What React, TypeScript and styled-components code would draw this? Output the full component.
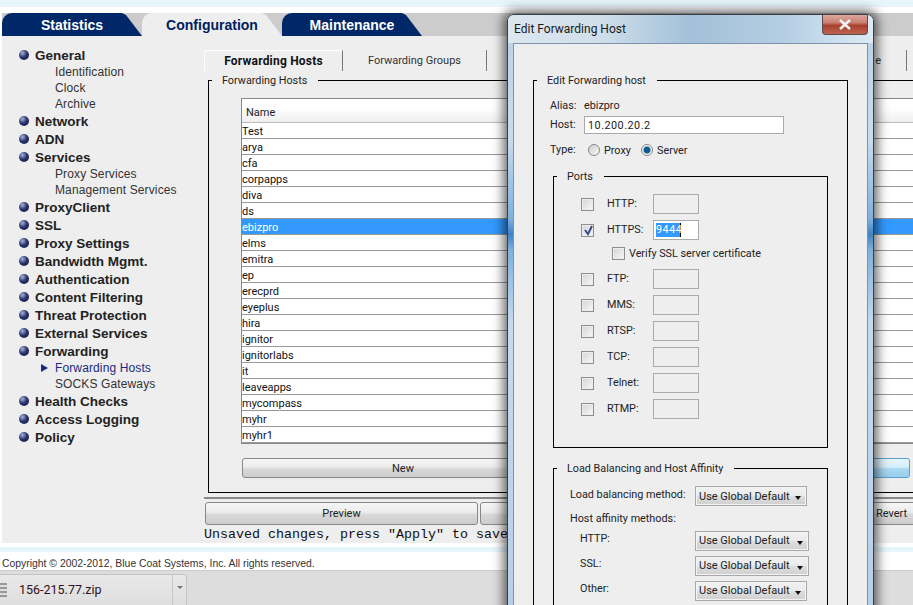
import React from "react";
import styled, { createGlobalStyle } from "styled-components";

const GlobalStyle = createGlobalStyle`
  html, body {
    margin: 0;
    padding: 0;
    background: #fff;
    overflow: hidden;
  }
  * { box-sizing: border-box; }
`;

const uiFont = `Roboto, "Noto Sans", sans-serif`;
const arial = `"Liberation Sans", Arial, sans-serif`;

const Page = styled.div`
  position: relative;
  width: 913px;
  height: 605px;
  overflow: hidden;
  background: #fff;
  font-family: ${arial};
`;

const TopStrip = styled.div`
  height: 7px;
  background: #e8f6fc;
  margin-bottom: 6px;
`;

const TabBar = styled.nav`
  display: flex;
  height: 23px;
  margin-left: 2px;
  background: #cccccc;
`;

const NavTab = styled.div<{ $active?: boolean }>`
  width: 140px;
  height: 23px;
  display: flex;
  align-items: center;
  justify-content: center;
  font-size: 14px;
  font-weight: bold;
  color: ${(p) => (p.$active ? "#002060" : "#fff")};
  background: ${(p) => (p.$active ? "#eeeeee" : "#002868")};
  border-top-left-radius: 10px;
  clip-path: polygon(0 0, 120px 0, 124px 2px, 140px 23px, 0 23px);
`;

const Body = styled.div`
  display: flex;
  height: 507px;
  margin-left: 2px;
  background: #eeeeee;
`;

const Sidebar = styled.ul`
  width: 202px;
  flex: none;
  list-style: none;
  margin: 0;
  padding: 10px 0 0 17px;
`;

const GroupRow = styled.li`
  display: flex;
  align-items: center;
  gap: 6px;
  height: 18px;
  line-height: 17px;
  font-size: 13.5px;
  font-weight: bold;
  color: #222;
`;

const Ball = styled.span`
  width: 10px;
  height: 10px;
  border-radius: 50%;
  background: radial-gradient(circle at 35% 30%, #aab4d8 0, #2a3570 45%, #0a1030 100%);
`;

const SubRow = styled.li<{ $current?: boolean }>`
  position: relative;
  height: 16px;
  line-height: 17px;
  padding-left: 36px;
  font-size: 12px;
  letter-spacing: 0.12px;
  color: ${(p) => (p.$current ? "#1a2a80" : "#333")};
`;

const CurrentArrow = styled.span`
  position: absolute;
  left: 22px;
  top: 4px;
  width: 0;
  height: 0;
  border-left: 7px solid #1a2a80;
  border-top: 4px solid transparent;
  border-bottom: 4px solid transparent;
`;

const Main = styled.div`
  width: 824px;
  flex: none;
  padding-top: 14px;
  margin-right: -200px;
`;

const SubTabs = styled.div`
  display: flex;
  height: 23px;
`;

const SubTab = styled.div<{ $active?: boolean; $w: number; $end?: boolean }>`
  width: ${(p) => p.$w}px;
  height: 21px;
  flex: none;
  display: flex;
  align-items: center;
  justify-content: ${(p) => (p.$end ? "flex-end" : "center")};
  padding-right: ${(p) => (p.$end ? 25 : 0)}px;
  font-family: ${uiFont};
  font-size: ${(p) => (p.$active ? 12 : 11)}px;
  letter-spacing: ${(p) => (p.$active ? 0.2 : 0)}px;
  font-weight: ${(p) => (p.$active ? "bold" : "normal")};
  color: ${(p) => (p.$active ? "#111" : "#333")};
  border-right: 1px solid #777;
  border-top: ${(p) => (p.$active ? "1px solid #fff" : "none")};
  border-left: ${(p) => (p.$active ? "1px solid #fff" : "none")};
  border-top-left-radius: ${(p) => (p.$active ? "4px" : "0")};
`;

const PanelBox = styled.fieldset`
  margin: 0 0 0 4px;
  padding: 11px 0 13px 32px;
  min-width: 0;
  border: 1px solid #000;
  height: 420px;
`;

const BoxTitle = styled.legend<{ $ml: number }>`
  margin-left: ${(p) => p.$ml}px;
  padding: 0 11px 0 10px;
  height: 14px;
  line-height: 15px;
  font-family: ${uiFont};
  font-size: 10.8px;
  color: #222;
`;

const HostTable = styled.div`
  width: 780px;
  height: 346px;
  overflow: hidden;
  border: 1px solid #888;
  background: #fff;
`;

const HeaderRow = styled.div`
  height: 24px;
  line-height: 27px;
  padding-left: 4px;
  font-family: ${uiFont};
  font-size: 11px;
  color: #222;
  background: linear-gradient(#fff 40%, #eeeeee);
  border-bottom: 1px solid #bbb;
`;

const HostRow = styled.div<{ $selected?: boolean }>`
  height: 16px;
  line-height: 17px;
  font-family: ${uiFont};
  font-size: 11px;
  color: ${(p) => (p.$selected ? "#fff" : "#111")};
  background: ${(p) => (p.$selected ? "#3399ff" : "#fff")};
  border-bottom: 1px solid #999;
`;

const ButtonRow = styled.div`
  display: flex;
  gap: 2px;
  margin-top: 14px;
  margin-left: 1px;
`;

const GrayButton = styled.div<{ $w: number; $hover?: boolean }>`
  width: ${(p) => p.$w}px;
  flex: none;
  height: 20px;
  display: flex;
  align-items: center;
  justify-content: center;
  font-family: ${uiFont};
  font-size: 11px;
  color: #222;
  border: 1px solid ${(p) => (p.$hover ? "#5a9fd0" : "#888")};
  border-radius: 3px;
  background: ${(p) =>
    p.$hover
      ? "linear-gradient(#e6f5fc 0, #d5eefa 45%, #a8d8f2 55%, #98cdec 100%)"
      : "linear-gradient(#f6f6f6 0, #ebebeb 45%, #d8d8d8 55%, #cdcdcd 100%)"};
`;

const PanelFoot = styled.div`
  margin-top: 4px;
  border-top: 2px solid #888;
  padding: 3px 0 0 1px;
`;

const FootButtons = styled.div`
  display: flex;
  gap: 2px;
`;

const FootButton = styled(GrayButton)`
  height: 23px;
`;

const Unsaved = styled.div`
  font-family: "Liberation Mono", monospace;
  font-size: 13.33px;
  line-height: 15px;
  color: #111;
  white-space: nowrap;
  margin: 2px 0 0 -1px;
`;

const FootStrip = styled.div`
  height: 5px;
  margin-top: 4px;
  background: #e8f6fc;
`;

const Copyright = styled.div`
  height: 18px;
  line-height: 24px;
  padding-left: 2px;
  font-size: 10.4px;
  color: #333;
`;

const Shelf = styled.div`
  display: flex;
  height: 35px;
  background: #dddddd;
  border-top: 1px solid #ccc;
`;

const ShelfItem = styled.div`
  position: relative;
  width: 187px;
  height: 34px;
  margin-top: 3px;
  display: flex;
  align-items: center;
  padding: 0 0 3px 19px;
  font-family: ${uiFont};
  font-size: 12.5px;
  color: #301020;
  border: 1px solid #c4c4c4;
  border-left: none;
  border-radius: 0 3px 0 0;
  background: linear-gradient(#e8e8e8, #dedede);
`;

const ShelfSplit = styled.span`
  position: absolute;
  right: 0;
  top: 0;
  bottom: 0;
  width: 14px;
  border-left: 1px solid #c8c8c8;
  &::after {
    content: "";
    position: absolute;
    left: 4px;
    top: 11px;
    border-top: 3px solid #777;
    border-left: 3px solid transparent;
    border-right: 3px solid transparent;
  }
`;

const ZipIcon = styled.span`
  position: absolute;
  left: 0;
  top: 8px;
  width: 7px;
  height: 15px;
  background: repeating-linear-gradient(#999 0 2px, #ddd 2px 4px);
`;

/* dialog window floating over the page */
const DialogWindow = styled.div`
  position: absolute;
  left: 507px;
  top: 14px;
  width: 367px;
  height: 620px;
  padding: 0 5px;
  border: 1px solid #3a3f45;
  border-radius: 7px 7px 0 0;
  box-shadow: 0 0 12px 3px rgba(0, 0, 0, 0.65);
  background: linear-gradient(
    #b9d0e6 0,
    #c8dcee 20%,
    #7fb0dc 33%,
    #3f82c4 35.5%,
    #7fb0dc 38%,
    #c4daee 50%,
    #b5cfe8 100%
  );
`;

const DialogTitleBar = styled.div`
  position: relative;
  height: 28px;
  margin: 0 -5px;
  padding: 6px 0 0 6px;
  border-radius: 6px 6px 0 0;
  font-family: ${uiFont};
  font-size: 12px;
  line-height: 16px;
  color: #1a1a1a;
  background: linear-gradient(90deg, #dbe6ef 0, #d0dfeb 25%, #a3c0da 50%, #b4cde2 75%, #dcebf5 100%);
`;

const CloseButton = styled.div`
  position: absolute;
  right: 5px;
  top: 0;
  width: 46px;
  height: 20px;
  display: flex;
  align-items: center;
  justify-content: center;
  border: 1px solid #5d4a4a;
  border-top: none;
  border-radius: 0 0 4px 4px;
  background: linear-gradient(#dca89c 0, #c98072 40%, #a8402e 55%, #bb6450 100%);
`;

const DialogClient = styled.div`
  height: 600px;
  padding: 29px 19px 0 19px;
  background: #eeeeee;
  border: 1px solid #7d93ab;
  font-family: ${uiFont};
  font-size: 10.8px;
  color: #222;
`;

const DialogBox = styled.fieldset`
  margin: 0;
  padding: 0 19px 0 16px;
  min-width: 0;
  border: 1px solid #000;
  height: 640px;
`;

const InnerBox = styled.fieldset<{ $h: number }>`
  margin: 0 0 13px 3px;
  padding: 0 0 0 27px;
  min-width: 0;
  height: ${(p) => p.$h}px;
  border: 1px solid #000;
`;

const PlainRow = styled.div<{ $h: number; $pl?: number; $ml?: number; $mt?: number; $mb?: number }>`
  display: flex;
  align-items: center;
  white-space: nowrap;
  height: ${(p) => p.$h}px;
  padding-left: ${(p) => p.$pl ?? 0}px;
  margin: ${(p) => p.$mt ?? 0}px 0 ${(p) => p.$mb ?? 0}px ${(p) => p.$ml ?? 0}px;
`;

// $lift moves the label up from the row centre, the labels sit above their controls
const RowLabel = styled.span<{ $w: number; $pl?: number; $lift?: number }>`
  width: ${(p) => p.$w}px;
  padding-left: ${(p) => p.$pl ?? 0}px;
  padding-bottom: ${(p) => p.$lift ?? 0}px;
  flex: none;
`;

const TextBox = styled.div<{ $w: number; $h: number }>`
  width: ${(p) => p.$w}px;
  height: ${(p) => p.$h}px;
  flex: none;
  display: flex;
  align-items: center;
  padding-left: 3px;
  letter-spacing: 0.5px;
  background: #fff;
  border: 1px solid #aaa;
`;

const DimBox = styled(TextBox)`
  background: #eeeeee;
`;

const Radio = styled.span<{ $on?: boolean }>`
  width: 12px;
  height: 12px;
  flex: none;
  margin-right: 4px;
  border-radius: 50%;
  border: 1px solid #888;
  background: ${(p) =>
    p.$on
      ? "radial-gradient(circle, #0a5f90 0 3px, #f0f0f0 4px)"
      : "linear-gradient(135deg, #ccc, #fbfbfb)"};
`;

const CheckBox = styled.span`
  position: relative;
  width: 13px;
  height: 13px;
  flex: none;
  border: 1px solid #8e8e8e;
  background: linear-gradient(135deg, #d4d4d4, #f8f8f8);
  box-shadow: inset 0 0 0 1px #eee;
`;

const CheckMark = styled.svg`
  position: absolute;
  left: 1px;
  top: 0;
`;

const VerifyText = styled.span`
  padding-left: 4px;
`;

const PortGap = styled.div`
  height: 3px;
`;

const SelectedText = styled.span`
  background: #3399ff;
  color: #fff;
  border-right: 1px solid #000;
  line-height: 14px;
  width: 25px;
  margin-left: -1px;
`;

const Select = styled.div<{ $w: number }>`
  width: ${(p) => p.$w}px;
  height: 20px;
  flex: none;
  position: relative;
  display: flex;
  align-items: center;
  padding-left: 3px;
  font-size: 11px;
  border: 1px solid #a8a8a8;
  box-shadow: inset 0 0 0 1px #f4f4f4;
  background: linear-gradient(#f2f2f2 0, #ebebeb 45%, #dcdcdc 55%, #d0d0d0 100%);
  &::after {
    content: "";
    position: absolute;
    right: 5px;
    top: 9px;
    border-top: 4px solid #111;
    border-left: 3.5px solid transparent;
    border-right: 3.5px solid transparent;
  }
`;

const hosts = [
  "Test", "arya", "cfa", "corpapps", "diva", "ds", "ebizpro", "elms", "emitra", "ep",
  "erecprd", "eyeplus", "hira", "ignitor", "ignitorlabs", "it", "leaveapps", "mycompass",
  "myhr", "myhr1", "",
];

const ports = ["FTP:", "MMS:", "RTSP:", "TCP:", "Telnet:", "RTMP:"];

function Group({ name }: { name: string }) {
  return (
    <GroupRow>
      <Ball />
      {name}
    </GroupRow>
  );
}

function PortRow({ label }: { label: string }) {
  return (
    <PlainRow $h={26}>
      <CheckBox />
      <RowLabel $w={59} $pl={13} $lift={2}>{label}</RowLabel>
      <DimBox $w={46} $h={20} />
    </PlainRow>
  );
}

export default function App() {
  return (
    <Page>
      <GlobalStyle />
      <TopStrip />
      <TabBar>
        <NavTab>Statistics</NavTab>
        <NavTab $active>Configuration</NavTab>
        <NavTab>Maintenance</NavTab>
      </TabBar>
      <Body>
        <Sidebar>
          <Group name="General" />
          <SubRow>Identification</SubRow>
          <SubRow>Clock</SubRow>
          <SubRow>Archive</SubRow>
          <Group name="Network" />
          <Group name="ADN" />
          <Group name="Services" />
          <SubRow>Proxy Services</SubRow>
          <SubRow>Management Services</SubRow>
          <Group name="ProxyClient" />
          <Group name="SSL" />
          <Group name="Proxy Settings" />
          <Group name="Bandwidth Mgmt." />
          <Group name="Authentication" />
          <Group name="Content Filtering" />
          <Group name="Threat Protection" />
          <Group name="External Services" />
          <Group name="Forwarding" />
          <SubRow $current>
            <CurrentArrow />
            Forwarding Hosts
          </SubRow>
          <SubRow>SOCKS Gateways</SubRow>
          <Group name="Health Checks" />
          <Group name="Access Logging" />
          <Group name="Policy" />
        </Sidebar>
        <Main>
          <SubTabs>
            <SubTab $active $w={139}>Forwarding Hosts</SubTab>
            <SubTab $w={144}>Forwarding Groups</SubTab>
            <SubTab $w={420} $end>e</SubTab>
          </SubTabs>
          <PanelBox>
            <BoxTitle $ml={-29}>Forwarding Hosts</BoxTitle>
            <HostTable>
              <HeaderRow>Name</HeaderRow>
              {hosts.map((h) => (
                <HostRow key={h} $selected={h === "ebizpro"}>{h}</HostRow>
              ))}
            </HostTable>
            <ButtonRow>
              <GrayButton $w={322}>New</GrayButton>
              <GrayButton $w={344} $hover />
            </ButtonRow>
          </PanelBox>
          <PanelFoot>
            <FootButtons>
              <FootButton $w={273}>Preview</FootButton>
              <FootButton $w={273} />
              <FootButton $w={273}>Revert</FootButton>
            </FootButtons>
            <Unsaved>Unsaved changes, press "Apply" to save</Unsaved>
          </PanelFoot>
        </Main>
      </Body>
      <FootStrip />
      <Copyright>Copyright © 2002-2012, Blue Coat Systems, Inc. All rights reserved.</Copyright>
      <Shelf>
        <ShelfItem>
          <ZipIcon />
          156-215.77.zip
          <ShelfSplit />
        </ShelfItem>
      </Shelf>

      <DialogWindow>
        <DialogTitleBar>
          Edit Forwarding Host
          <CloseButton>
            <svg width="14" height="11" viewBox="0 0 14 11">
              <path d="M2 1 L12 10 M12 1 L2 10" stroke="#f2f2f2" strokeWidth="2.6" />
            </svg>
          </CloseButton>
        </DialogTitleBar>
        <DialogClient>
          <DialogBox>
            <BoxTitle $ml={-13}>Edit Forwarding host</BoxTitle>
            <PlainRow $h={22} $mt={7}>
              <RowLabel $w={34}>Alias:</RowLabel>
              ebizpro
            </PlainRow>
            <PlainRow $h={18}>
              <RowLabel $w={34} $lift={2}>Host:</RowLabel>
              <TextBox $w={200} $h={18}>10.200.20.2</TextBox>
            </PlainRow>
            <PlainRow $h={32} $mb={3}>
              <RowLabel $w={38} $lift={2}>Type:</RowLabel>
              <Radio />
              <RowLabel $w={37}>Proxy</RowLabel>
              <Radio $on />
              Server
            </PlainRow>
            <InnerBox $h={279}>
              <BoxTitle $ml={-24}>Ports</BoxTitle>
              <PlainRow $h={26} $mt={8}>
                <CheckBox />
                <RowLabel $w={59} $pl={13} $lift={2}>HTTP:</RowLabel>
                <DimBox $w={46} $h={20} />
              </PlainRow>
              <PlainRow $h={26}>
                <CheckBox>
                  <CheckMark width="11" height="11" viewBox="0 0 11 11">
                    <path d="M2 5 L5 9 L9 1" fill="none" stroke="#3a4a90" strokeWidth="2" />
                  </CheckMark>
                </CheckBox>
                <RowLabel $w={59} $pl={13} $lift={2}>HTTPS:</RowLabel>
                <TextBox $w={46} $h={20}>
                  <SelectedText>9444</SelectedText>
                </TextBox>
              </PlainRow>
              <PlainRow $h={20} $pl={31}>
                <CheckBox />
                <VerifyText>Verify SSL server certificate</VerifyText>
              </PlainRow>
              <PortGap />
              {ports.map((p) => (
                <PortRow key={p} label={p} />
              ))}
            </InnerBox>
            <InnerBox $h={200}>
              <BoxTitle $ml={-24}>Load Balancing and Host Affinity</BoxTitle>
              <PlainRow $h={26} $ml={-11} $mt={8}>
                <RowLabel $w={125} $lift={4}>Load balancing method:</RowLabel>
                <Select $w={112}>Use Global Default</Select>
              </PlainRow>
              <PlainRow $h={19} $ml={-11}>Host affinity methods:</PlainRow>
              <PlainRow $h={25} $ml={-1}>
                <RowLabel $w={115} $lift={4}>HTTP:</RowLabel>
                <Select $w={114}>Use Global Default</Select>
              </PlainRow>
              <PlainRow $h={25} $ml={-1}>
                <RowLabel $w={115} $lift={4}>SSL:</RowLabel>
                <Select $w={114}>Use Global Default</Select>
              </PlainRow>
              <PlainRow $h={25} $ml={-1}>
                <RowLabel $w={115} $lift={4}>Other:</RowLabel>
                <Select $w={112}>Use Global Default</Select>
              </PlainRow>
            </InnerBox>
          </DialogBox>
        </DialogClient>
      </DialogWindow>
    </Page>
  );
}
